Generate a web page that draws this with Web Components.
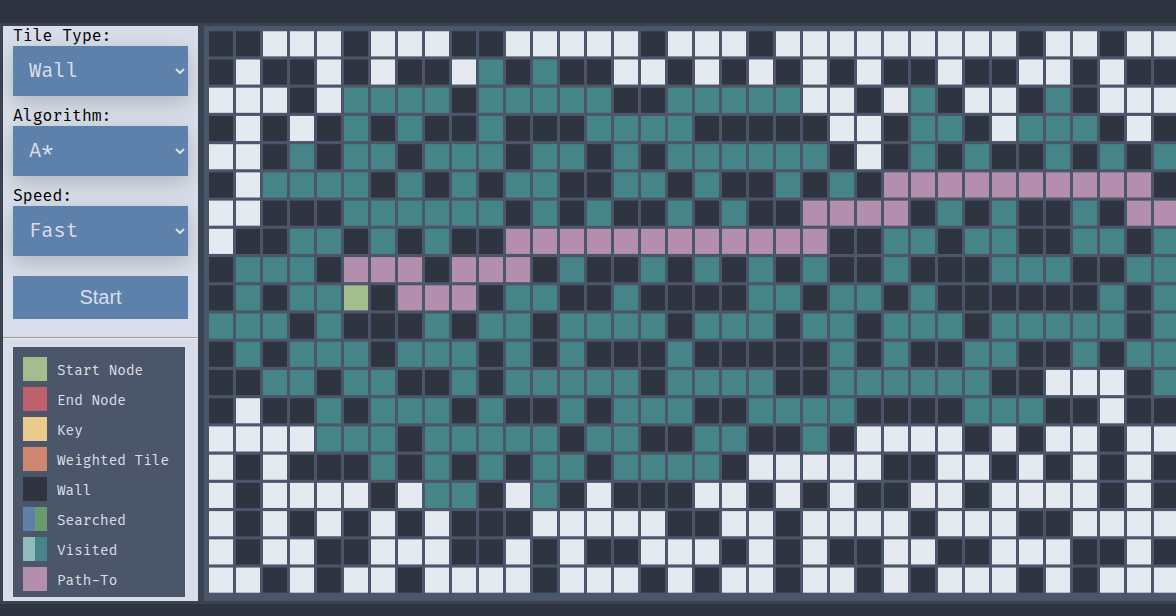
<!DOCTYPE html>
<html lang="en">
<head>
<meta charset="utf-8">
<title>Pathfinding Visualizer</title>
<style>
  body { margin: 0; background: #2e3440; font-family: "Fira Code", "Fira Mono", "DejaVu Sans Mono", monospace; }
</style>
</head>
<body>
<path-app>
  <control-panel slot="side">
    <labelled-select label="Tile Type:" options="Wall,Weighted Tile,Key"></labelled-select>
    <labelled-select label="Algorithm:" options="A*,Dijkstra"></labelled-select>
    <labelled-select label="Speed:" options="Fast,Medium,Slow"></labelled-select>
    <start-button>Start</start-button>
    <tile-legend slot="legend">
      <legend-item style="--a:#a3be8c">Start Node</legend-item>
      <legend-item style="--a:#bf616a">End Node</legend-item>
      <legend-item style="--a:#ebcb8b">Key</legend-item>
      <legend-item style="--a:#d08770">Weighted Tile</legend-item>
      <legend-item style="--a:#2e3440">Wall</legend-item>
      <legend-item style="--a:#5e81ac;--b:#689d6a">Searched</legend-item>
      <legend-item style="--a:#8fbcbb;--b:#458588">Visited</legend-item>
      <legend-item style="--a:#b48ead">Path-To</legend-item>
    </tile-legend>
  </control-panel>
  <tile-board></tile-board>
</path-app>

<script>
const define = (name, html, setup) => {
  const template = document.createElement('template');
  template.innerHTML = html;
  customElements.define(name, class extends HTMLElement {
    constructor() {
      super();
      this.attachShadow({ mode: 'open' }).append(template.content.cloneNode(true));
    }
    connectedCallback() { if (setup) setup(this, this.shadowRoot); }
  });
};

define('path-app', `
  <style>
    :host { display: grid; grid-template-rows: 23px 1fr 12px; min-height: 100vh; overflow: hidden; }
    main { display: flex; min-width: 0; background: #3b4252; padding: 3px 0 3px 3px; gap: 6px; }
  </style>
  <header></header>
  <main><slot name="side"></slot><slot></slot></main>
  <footer></footer>`);

define('control-panel', `
  <style>
    :host { display: block; flex: none; width: 195px; background: #d8dee9; }
    .controls { display: flex; flex-direction: column; gap: 10px; padding: 0 10px 18px; }
    hr { margin: 0 0 8px; border: 1px solid; border-color: #9a9a9a #eeeeee #eeeeee #9a9a9a; }
  </style>
  <div class="controls"><slot></slot></div>
  <hr>
  <slot name="legend"></slot>`);

define('labelled-select', `
  <style>
    :host { display: block; }
    label { display: block; font-size: 16px; line-height: 20px; color: #000; }
    select { display: block; width: 100%; height: 50px; border: 0; border-radius: 0; padding: 0 0 0 12px;
      background-color: #5e81ac; color: #d8dee9; font: 20px "Fira Code", "Fira Mono", "DejaVu Sans Mono", monospace;
      box-shadow: 0 6px 20px rgba(0, 0, 0, .19); }
  </style>
  <label for="field"></label>
  <select id="field"></select>`, (host, root) => {
  root.querySelector('label').textContent = host.getAttribute('label');
  root.querySelector('select').replaceChildren(
    ...host.getAttribute('options').split(',').map(name => new Option(name)));
});

define('start-button', `
  <style>
    :host { display: block; margin-top: 10px; }
    button { display: block; width: 100%; height: 43px; border: 0; padding: 0; background: #5e81ac; color: #d8dee9;
      font: 20px "Liberation Sans", Arial, sans-serif; }
  </style>
  <button type="button"><slot></slot></button>`);

define('tile-legend', `
  <style>
    :host { display: flex; flex-direction: column; gap: 6px; margin: 0 13px 4px 10px; padding: 10px;
      padding-bottom: 6px; background: #4c566a; color: #d8dee9; }
  </style>
  <slot></slot>`);

define('legend-item', `
  <style>
    :host { display: flex; gap: 10px; font-size: 14px; line-height: 28px; height: 24px; white-space: nowrap; }
    i { flex: none; width: 24px; background: linear-gradient(90deg, var(--a) 50%, var(--b, var(--a)) 50%); }
  </style>
  <i></i><span><slot></slot></span>`);

/* One letter per tile: # wall, . open, v visited, p path, s start */
const ROWS = [
  '##...#...##.....#...#.........#..#..',
  '#.##.#.##.v#v##..#.#.#.#.##.##..#.##',
  '...#.vvvv#vvvvv##vvvvv..#.v#..#v#...',
  '#.#.#v#v##v###vvvv#####..#vv#.vvv#.#',
  '..#v#vv#vvv#vv#v#vvvvvv#.#v#v##v#v#v',
  '#.vvvv#v#v#vv##vv#v##v#v#pppppppppp#',
  '..###vvvvvv#v#v##v#v##pppp#v#v##v#pp',
  '.##vv#v#v##pppppppppppp##vv#vv##vv#v',
  '#vvv#ppp#ppp#v##v#v#v#v##v###vvv##vv',
  '#v#vvs#ppp#vv##v####vv#vv#v######v#v',
  'vvv#v###v#vv#vvvv#vvv#vv#vvv#vvvvv#v',
  '#v#vvv#vvv#v#v###v#####v#v##vv##v#vv',
  '##vv#vv##v#vvvvv#vvvv##vvvvvv##...#v',
  '#.##v#vvv#v##v#vvv##vvvv####vvv##.##',
  '....vvv#vvvvv#vv##vv##v#....#.#..#..',
  '.#.###v#v#v#vv#vvvv#.....##..#.#.#.#',
  '.#....#.vv#.v#.###..#.#.##..#....#.#',
  '.#.#.#.#.###.....##..#....#...##....',
  '.#..##...##.#.##...#.#.##..##...##.#',
  '..#.#..#....#...#.#..#..#.#...#.#...',
];
const COLORS = { '#': '#2e3440', '.': '#e5e9f0', v: '#458588', p: '#b48ead', s: '#a3be8c' };
const MARGIN = 5, TILE = 24, PITCH = 27;

/* The tiles keep their width and stretch to the height of the main area */
define('tile-board', `
  <style>
    :host { display: block; flex: 1; min-width: 0; overflow: hidden; background: #4c566a; contain: size; }
    canvas { display: block; height: 100%; }
  </style>
  <canvas width="990" height="550" role="img" aria-label="Pathfinding grid"></canvas>`, (host, root) => {
  const canvas = root.querySelector('canvas');
  canvas.style.width = canvas.width + 'px';
  const ctx = canvas.getContext('2d');
  ROWS.forEach((line, row) => [...line].forEach((kind, column) => {
    ctx.fillStyle = COLORS[kind];
    ctx.fillRect(MARGIN + column * PITCH, MARGIN + row * PITCH, TILE, TILE);
  }));
});
</script>
</body>
</html>
